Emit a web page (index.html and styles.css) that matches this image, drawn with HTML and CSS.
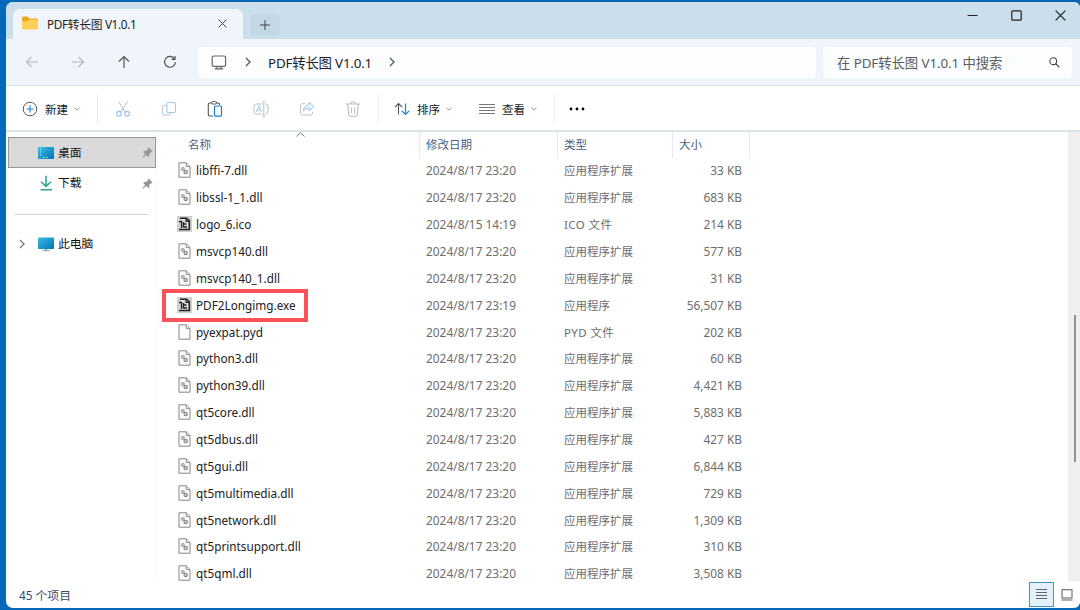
FILE: index.html
```html
<!DOCTYPE html>
<html lang="zh-CN">
<head>
  <meta charset="UTF-8">
  <meta name="viewport" content="width=device-width, initial-scale=1.0">
  <title>PDF转长图 V1.0.1</title>
  <link rel="stylesheet" href="styles.css">
</head>
<body>
  <!-- Shared icons -->
  <svg class="sprite" width="0" height="0">
    <symbol id="chevron" viewBox="0 0 8 10">
      <path d="M2 1l4 4-4 4" fill="none" stroke="currentColor" stroke-width="1.3"/>
    </symbol>
    <symbol id="caret" viewBox="0 0 6 4">
      <path d="M.5 .7L3 3.1 5.5 .7" fill="none" stroke="#999" stroke-width="1"/>
    </symbol>
    <symbol id="cross" viewBox="0 0 10 10">
      <path d="M.6 .6l8.8 8.8M9.4 .6L.6 9.4" fill="none" stroke="currentColor" stroke-width="1.1"/>
    </symbol>
    <symbol id="pin" viewBox="0 0 12 12">
      <path d="M7.2 .5l4.3 4.2-.8 1-.9-.1-2 2 .2 2.1-1.1 1.100-2.300-2.200L1 11.700l-.5-.4 3-3.700L1.300 5.400l1-1.100 2.200.1 2-2-.2-.9z" fill="#8f9798"/>
    </symbol>
    <symbol id="file" viewBox="0 0 13 16">
      <path d="M1 .8h7.2L12 4.6v10.6H1z" fill="#fcfcfc" stroke="#858585" stroke-width="1"/>
      <path d="M8.2 .8v3.8H12" fill="none" stroke="#858585" stroke-width=".9"/>
    </symbol>
    <symbol id="dll" viewBox="0 0 13 16">
      <use href="#file"/>
      <circle cx="4.900" cy="7" r="1.400" fill="#ddd" stroke="#a0a0a0" stroke-width="1.200"/>
      <circle cx="7.700" cy="10" r="1.600" fill="#ddd" stroke="#8e8e8e" stroke-width="1.400"/>
    </symbol>
    <symbol id="app" viewBox="0 0 15 16">
      <path d="M0 0h15v16H0z" fill="#cfcfcf"/>
      <path d="M3 2.200h6.500l2.800 2.600v8.700H2" fill="#e2e2e2" stroke="#222" stroke-width="1.600"/>
      <path d="M9 2v3.300h3.300" fill="none" stroke="#222" stroke-width="1.200"/>
      <path d="M2 5.500h2.500V12M6.500 6v5.500M6.500 8h3M6.500 11h3.500" fill="none" stroke="#222" stroke-width="1.400"/>
    </symbol>
  </svg>

  <div class="window">
    <div class="titlebar">
      <div class="tab">
        <svg class="folder" width="16" height="14" viewBox="0 0 16 14">
          <path d="M0 2Q0 .5 1.500 .5h4L7.500 2.500h7Q16 2.500 16 4v3H0z" fill="#e9a820"/>
          <path d="M0 5h6l1.500-1.500h7Q16 3.500 16 5v7q0 1.500-1.500 1.500h-13Q0 13.500 0 12z" fill="#fccf58"/>
        </svg>
        <span class="tab-title">PDF转长图 V1.0.1</span>
        <svg class="tab-close" width="9" height="9"><use href="#cross"/></svg>
      </div>
      <div class="new-tab">
        <svg width="10" height="10" viewBox="0 0 10 10"><path d="M5 0v10M0 5h10" stroke="#444" stroke-width="1"/></svg>
      </div>
      <div class="controls">
        <svg width="11" height="11" viewBox="0 0 11 11"><path d="M.5 5.500h10" stroke="#222" stroke-width="1.200"/></svg>
        <svg width="11" height="11" viewBox="0 0 11 11"><rect x=".8" y=".8" width="9.400" height="9.400" rx="1" fill="none" stroke="#222" stroke-width="1.200"/></svg>
        <svg width="11" height="11"><use href="#cross"/></svg>
      </div>
    </div>

    <div class="navbar">
      <div class="nav-buttons">
        <svg class="disabled" width="14" height="14" viewBox="0 0 14 14"><path d="M13 7H1.500M6.500 2l-5 5 5 5" fill="none" stroke="currentColor" stroke-width="1.100"/></svg>
        <svg class="disabled" width="14" height="14" viewBox="0 0 14 14"><path d="M1 7h11.500M7.500 2l5 5-5 5" fill="none" stroke="currentColor" stroke-width="1.100"/></svg>
        <svg width="14" height="14" viewBox="0 0 14 14"><path d="M7 13V1.500M2 6.500l5-5 5 5" fill="none" stroke="currentColor" stroke-width="1.200"/></svg>
        <svg width="14" height="14" viewBox="0 0 14 14"><path d="M11.600 4A5.400 5.400 0 1 0 12.400 7M12 1v3.400H8.500" fill="none" stroke="currentColor" stroke-width="1.200"/></svg>
      </div>
      <div class="address">
        <svg width="16" height="15" viewBox="0 0 16 15"><rect x="1.200" y="1" width="13.400" height="10.400" rx="1.600" fill="none" stroke="#666" stroke-width="1.200"/><path d="M6 11.500v2.200M10 11.500v2.200M3.800 13.900h8.400" stroke="#666" stroke-width="1.200"/></svg>
        <svg class="sep" width="8" height="10"><use href="#chevron"/></svg>
        <span class="path">PDF转长图 V1.0.1</span>
        <svg class="sep" width="8" height="10"><use href="#chevron"/></svg>
      </div>
      <div class="search">
        <span>在 PDF转长图 V1.0.1 中搜索</span>
        <svg width="11" height="11" viewBox="0 0 11 11"><circle cx="4.200" cy="4.200" r="3.400" fill="none" stroke="#444" stroke-width="1.100"/><path d="M6.700 6.700l3.700 3.700" stroke="#444" stroke-width="1.200"/></svg>
      </div>
    </div>

    <div class="toolbar">
      <div class="tool new">
        <svg width="16" height="16" viewBox="0 0 16 16"><circle cx="8" cy="8" r="6.800" fill="#fff" stroke="#555" stroke-width="1"/><path d="M8 4.500v7M4.500 8h7" stroke="#1c84d8" stroke-width="1.200"/></svg>
        <span>新建</span>
        <svg width="6" height="4"><use href="#caret"/></svg>
      </div>
      <div class="tool icons">
        <svg width="16" height="16" viewBox="0 0 16 16"><path d="M3.500 .5l6.700 10.600M12.500 .5L5.800 11.100" fill="none" stroke="#bbb" stroke-width="1"/><circle cx="3.900" cy="12.700" r="2.300" fill="none" stroke="#91c2ed" stroke-width="1.100"/><circle cx="12.100" cy="12.700" r="2.300" fill="none" stroke="#91c2ed" stroke-width="1.100"/></svg>
        <svg width="16" height="16" viewBox="0 0 16 16"><path d="M4.800 4.500H3Q1.500 4.500 1.500 6v6.500Q1.500 14 3 14h5.500q1.500 0 1.500-1.500V12" fill="none" stroke="#bcc7d1"/><rect x="5.800" y="1.500" width="8.700" height="10" rx="1.500" fill="none" stroke="#9dc9f0" stroke-width="1.100"/></svg>
        <svg width="16" height="16" viewBox="0 0 16 16"><path d="M6 15H2.500Q1.300 15 1.300 13.800V3.200Q1.300 2 2.500 2h8.800q1.200 0 1.200 1.200V4" fill="none" stroke="#555" stroke-width="1.100"/><rect x="4.500" y=".6" width="5" height="2.400" rx="1" fill="#fff" stroke="#555"/><rect x="7.500" y="5" width="7" height="10.200" rx="1.200" fill="#fff" stroke="#1879d3" stroke-width="1.200"/></svg>
        <svg width="16" height="16" viewBox="0 0 16 16"><path d="M9 13H3Q1 13 1 11V5q0-2 2-2h6M12.500 3q2.500 0 2.500 2v6q0 2-2.500 2" fill="none" stroke="#bbbfc5"/><path d="M10.800 1v14M9.300 .8h3M9.300 15.200h3M3.300 11L6 4.800 8.700 11M4.300 9h3.400" fill="none" stroke="#9cc8ef"/></svg>
        <svg width="16" height="16" viewBox="0 0 16 16"><path d="M6 2.700H3.500q-2 0-2 2V12q0 2 2 2h8q2 0 2-2v-1.500" fill="none" stroke="#bfc3c8"/><path d="M10 1.200L15 5.600l-5 4.200V7.200Q6.500 7 4.300 10.200 5 4 10 3.800z" fill="#eaf5fd" stroke="#9cc8ef"/></svg>
        <svg width="16" height="16" viewBox="0 0 16 16"><path d="M1 3h14M5.700 2.800Q5.700 .8 8 .8t2.300 2M2.700 3.200L3.800 14q.1 1.300 1.500 1.300h5.400q1.400 0 1.500-1.300l1.100-10.800M6.400 6.400v5.500M9.600 6.400v5.500" fill="none" stroke="#bcbcbc" stroke-width="1.100"/></svg>
      </div>
      <div class="tool sort">
        <svg width="16" height="14" viewBox="0 0 16 14"><path d="M4.500 12.500v-11M.8 5.200l3.700-3.700 3.700 3.700" fill="none" stroke="#555" stroke-width="1.100"/><path d="M11.500 1.500v11M7.800 8.800l3.700 3.700 3.700-3.700" fill="none" stroke="#1c84d0" stroke-width="1.200"/></svg>
        <span>排序</span>
        <svg width="6" height="4"><use href="#caret"/></svg>
      </div>
      <div class="tool view">
        <svg width="16" height="12" viewBox="0 0 16 12"><path d="M0 1.500h16M0 4.500h16M0 7.500h16M0 10.500h16" stroke="#777"/></svg>
        <span>查看</span>
        <svg width="6" height="4"><use href="#caret"/></svg>
      </div>
      <div class="tool more">
        <svg width="16" height="4" viewBox="0 0 16 4"><circle cx="2" cy="2" r="1.400"/><circle cx="8" cy="2" r="1.400"/><circle cx="14" cy="2" r="1.400"/></svg>
      </div>
    </div>

    <div class="content">
      <div class="sidebar">
        <div class="side-item selected">
          <svg width="16" height="12" viewBox="0 0 16 12"><defs><linearGradient id="blue" x1="0" y1="0" x2="1" y2="1"><stop offset="0" stop-color="#35bfe0"/><stop offset="1" stop-color="#0872b8"/></linearGradient></defs><rect width="16" height="12" rx="1" fill="url(#blue)"/><path d="M2 2h1.300M2 5h1.300M2 8h1.300M5 10.500h1.500M8 10.500h1.500" stroke="#c5f2ff" stroke-width="1.200"/></svg>
          <span>桌面</span>
          <svg class="pin" width="11" height="11"><use href="#pin"/></svg>
        </div>
        <div class="side-item">
          <svg width="16" height="16" viewBox="0 0 16 16"><path d="M8 .8v10.500M3.200 6.800L8 11.500l4.800-4.700M2.500 14.700h11.500" fill="none" stroke="#28a98c" stroke-width="1.600"/></svg>
          <span>下载</span>
          <svg class="pin" width="11" height="11"><use href="#pin"/></svg>
        </div>
        <div class="divider"></div>
        <div class="side-item pc">
          <svg class="expand" width="8" height="10"><use href="#chevron"/></svg>
          <svg width="16" height="15" viewBox="0 0 16 15"><rect y=".5" width="16" height="11.500" rx=".8" fill="url(#blue)"/><path d="M6.500 12h3v1.500h-3zM4 13.300h8v1H4z" fill="#9ab0bb"/></svg>
          <span>此电脑</span>
        </div>
      </div>

      <div class="files">
        <div class="row header">
          <div>名称<svg class="sort-mark" width="9" height="5" viewBox="0 0 9 5"><path d="M.5 4.500l4-3.700 4 3.700" fill="none" stroke="#777"/></svg></div>
          <div>修改日期</div>
          <div>类型</div>
          <div>大小</div>
        </div>
        <div class="row"><div class="name"><svg><use href="#dll"/></svg>libffi-7.dll</div><div class="num">2024/8/17 23:20</div><div>应用程序扩展</div><div class="size">33 KB</div></div>
        <div class="row"><div class="name"><svg><use href="#dll"/></svg>libssl-1_1.dll</div><div class="num">2024/8/17 23:20</div><div>应用程序扩展</div><div class="size">683 KB</div></div>
        <div class="row"><div class="name"><svg><use href="#app"/></svg>logo_6.ico</div><div class="num">2024/8/15 14:19</div><div class="latin">ICO 文件</div><div class="size">214 KB</div></div>
        <div class="row"><div class="name"><svg><use href="#dll"/></svg>msvcp140.dll</div><div class="num">2024/8/17 23:20</div><div>应用程序扩展</div><div class="size">577 KB</div></div>
        <div class="row"><div class="name"><svg><use href="#dll"/></svg>msvcp140_1.dll</div><div class="num">2024/8/17 23:20</div><div>应用程序扩展</div><div class="size">31 KB</div></div>
        <div class="row marked"><div class="name"><svg><use href="#app"/></svg>PDF2Longimg.exe</div><div class="num">2024/8/17 23:19</div><div>应用程序</div><div class="size">56,507 KB</div></div>
        <div class="row"><div class="name"><svg><use href="#file"/></svg>pyexpat.pyd</div><div class="num">2024/8/17 23:20</div><div class="latin">PYD 文件</div><div class="size">202 KB</div></div>
        <div class="row"><div class="name"><svg><use href="#dll"/></svg>python3.dll</div><div class="num">2024/8/17 23:20</div><div>应用程序扩展</div><div class="size">60 KB</div></div>
        <div class="row"><div class="name"><svg><use href="#dll"/></svg>python39.dll</div><div class="num">2024/8/17 23:20</div><div>应用程序扩展</div><div class="size">4,421 KB</div></div>
        <div class="row"><div class="name"><svg><use href="#dll"/></svg>qt5core.dll</div><div class="num">2024/8/17 23:20</div><div>应用程序扩展</div><div class="size">5,883 KB</div></div>
        <div class="row"><div class="name"><svg><use href="#dll"/></svg>qt5dbus.dll</div><div class="num">2024/8/17 23:20</div><div>应用程序扩展</div><div class="size">427 KB</div></div>
        <div class="row"><div class="name"><svg><use href="#dll"/></svg>qt5gui.dll</div><div class="num">2024/8/17 23:20</div><div>应用程序扩展</div><div class="size">6,844 KB</div></div>
        <div class="row"><div class="name"><svg><use href="#dll"/></svg>qt5multimedia.dll</div><div class="num">2024/8/17 23:20</div><div>应用程序扩展</div><div class="size">729 KB</div></div>
        <div class="row"><div class="name"><svg><use href="#dll"/></svg>qt5network.dll</div><div class="num">2024/8/17 23:20</div><div>应用程序扩展</div><div class="size">1,309 KB</div></div>
        <div class="row"><div class="name"><svg><use href="#dll"/></svg>qt5printsupport.dll</div><div class="num">2024/8/17 23:20</div><div>应用程序扩展</div><div class="size">310 KB</div></div>
        <div class="row"><div class="name"><svg><use href="#dll"/></svg>qt5qml.dll</div><div class="num">2024/8/17 23:20</div><div>应用程序扩展</div><div class="size">3,508 KB</div></div>
      </div>

      <div class="scrollbar"><div class="thumb"></div></div>
    </div>

    <div class="statusbar">
      <span>45 个项目</span>
      <div class="view-btn active">
        <svg width="11" height="11" viewBox="0 0 11 11"><path d="M0 .5h11M0 3.500h11M0 6.500h11M0 9.500h11" stroke="#666"/></svg>
      </div>
      <div class="view-btn">
        <svg width="12" height="12" viewBox="0 0 12 12"><rect x="1" y=".7" width="10" height="8.300" fill="none" stroke="#666" stroke-width="1.100"/><path d="M.5 11h11" stroke="#999" stroke-width="1.500"/></svg>
      </div>
    </div>
  </div>
</body>
</html>
```

FILE: styles.css
```css
*, *::after {
  box-sizing: border-box;
}
body {
  margin: 0;
  height: 610px;
  padding: 2px 0 2px 6px;
  overflow: hidden;
  background: #0568b8;
  font-family: "Noto Sans", "Noto Sans CJK SC", sans-serif;
  font-size: 11.5px;
  color: #222;
  white-space: nowrap;
}
svg {
  display: block;
  flex-shrink: 0;
}
.sprite {
  position: absolute;
}
.window {
  height: 606px;
  display: flex;
  flex-direction: column;
  background: #fff;
  border-radius: 7px 6px 6px 7px;
  overflow: hidden;
}

/* Title bar */
.titlebar {
  height: 37px;
  display: flex;
  align-items: flex-end;
  background: #cbdeeb;
  padding-left: 7px;
}
.tab {
  width: 230px;
  height: 30px;
  display: flex;
  align-items: center;
  padding: 0 16px 2px 9px;
  background: #f0f5fc;
  border-radius: 7px 7px 0 0;
}
.tab-title {
  margin-left: 9px;
  font-size: 11.8px;
  letter-spacing: -0.35px;
}
.tab-close {
  margin-left: auto;
  color: #444;
}
.new-tab {
  width: 30px;
  height: 22px;
  margin: 0 0 3px 7px;
  display: grid;
  place-items: center;
  background: #c3d7e5;
  border-radius: 4px;
}
.controls {
  display: flex;
  gap: 33px;
  margin-left: auto;
  padding: 0 14px 18px 0;
  color: #222;
}

/* Navigation bar */
.navbar {
  height: 47px;
  display: flex;
  align-items: center;
  padding: 0 8px 0 19px;
  background: #f0f5fc;
  border-bottom: 1px solid #d7e0ea;
}
.nav-buttons {
  display: flex;
  gap: 32px;
  color: #555;
}
.nav-buttons .disabled {
  color: #b3b7bc;
}
.address, .search {
  height: 31px;
  display: flex;
  align-items: center;
  background: #fbfdff;
  border-radius: 4px;
  font-size: 13.4px;
}
.address {
  width: 618px;
  margin-left: 21px;
  padding-left: 13px;
}
.sep {
  margin-left: 17px;
  color: #555;
}
.path {
  margin-left: 16px;
  letter-spacing: -0.2px;
}
.path + .sep {
  margin-left: 16px;
}
.address span, .search span {
  margin-top: -1px;
}
.search {
  flex: 1;
  margin-left: 7px;
  padding: 0 12px 0 14px;
  justify-content: space-between;
  color: #5c5c5c;
  letter-spacing: -0.1px;
}

/* Command bar */
.toolbar {
  height: 46px;
  display: flex;
  align-items: center;
  padding-top: 2px;
  border-bottom: 2px solid #dbe3eb;
}
.tool {
  height: 30px;
  display: flex;
  align-items: center;
}
.tool span + svg {
  margin-left: 6px;
}
.new {
  width: 92px;
  padding-left: 16px;
  border-right: 1px solid #e6e9ec;
}
.new span {
  margin-left: 7px;
}
.icons {
  width: 281px;
  gap: 30px;
  padding-left: 17px;
  border-right: 1px solid #eceef0;
}
.sort {
  padding-left: 15px;
}
.sort span {
  margin-left: 7px;
}
.view {
  width: 76px;
  margin-left: 27px;
  border-right: 1px solid #eceef0;
}
.view span {
  margin-left: 7px;
}
.more {
  padding-left: 14px;
}

/* Sidebar and file list */
.content {
  height: 449px;
  display: flex;
}
.sidebar {
  width: 152px;
  padding: 5px 0 0 2px;
  border-right: 1px solid #fafafa;
}
.side-item {
  width: 148px;
  height: 31px;
  display: flex;
  align-items: center;
  padding: 0 3px 0 30px;
  color: #111;
}
.side-item span {
  margin: -3px 0 0 4px;
  font-size: 11.8px;
}
.side-item.selected {
  padding: 0 2px 0 29px;
  background: #d9d9d9;
  border: 1px solid #979797;
}
.side-item:not(.selected) {
  padding-bottom: 1px;
}
.pin {
  margin-left: auto;
}
.divider {
  width: 133px;
  margin: 15px 0 14px 7px;
  border-top: 1px solid #d2d2d2;
}
.side-item.pc {
  padding-left: 10px;
}
.expand {
  margin-right: 12px;
  color: #777;
}
.files {
  flex: 1;
}
.row {
  height: 26.87px;
  display: grid;
  grid-template-columns: 262px 138px 115px 77px;
  align-items: center;
  color: #6d6d6d;
}
.row > div {
  padding-left: 6px;
  padding-bottom: 2px;
}
.header {
  height: 26px;
  color: #4b607e;
}
.header > div {
  height: 26px;
  line-height: 25px;
  border-right: 1px solid #e5e8ec;
}
.header > div:first-child {
  position: relative;
  padding-left: 30px;
}
.sort-mark {
  position: absolute;
  left: 138px;
  top: 0;
}
.row .name {
  display: flex;
  align-items: center;
  gap: 4px;
  padding-left: 19px;
  font-size: 11.75px;
  color: #222;
}
.name svg {
  width: 15px;
  height: 16px;
}
.row .num {
  font-size: 11.9px;
}
.row .latin {
  letter-spacing: 0.4px;
}
.row .size {
  padding: 0 8px 2px 0;
  font-size: 11.9px;
  text-align: right;
}
.marked {
  position: relative;
}
/* Red frame over the program to run */
.marked::after {
  content: "";
  position: absolute;
  left: 4px;
  top: -3px;
  width: 146px;
  height: 33px;
  border: 4px solid #f9525a;
}
.scrollbar {
  width: 12px;
  padding: 183px 0 0 6px;
  background: #efefef;
}
.thumb {
  width: 2px;
  height: 147px;
  background: #929292;
}

/* Status bar */
.statusbar {
  height: 27px;
  display: flex;
  align-items: center;
  padding: 0 1px 0 13px;
  color: #34496b;
}
.statusbar span {
  margin-right: auto;
  font-size: 11.8px;
}
.view-btn {
  width: 25px;
  height: 25px;
  display: grid;
  place-items: center;
}
.view-btn.active {
  background: #e2f2fc;
  border: 1px solid #3d95cc;
}
```
